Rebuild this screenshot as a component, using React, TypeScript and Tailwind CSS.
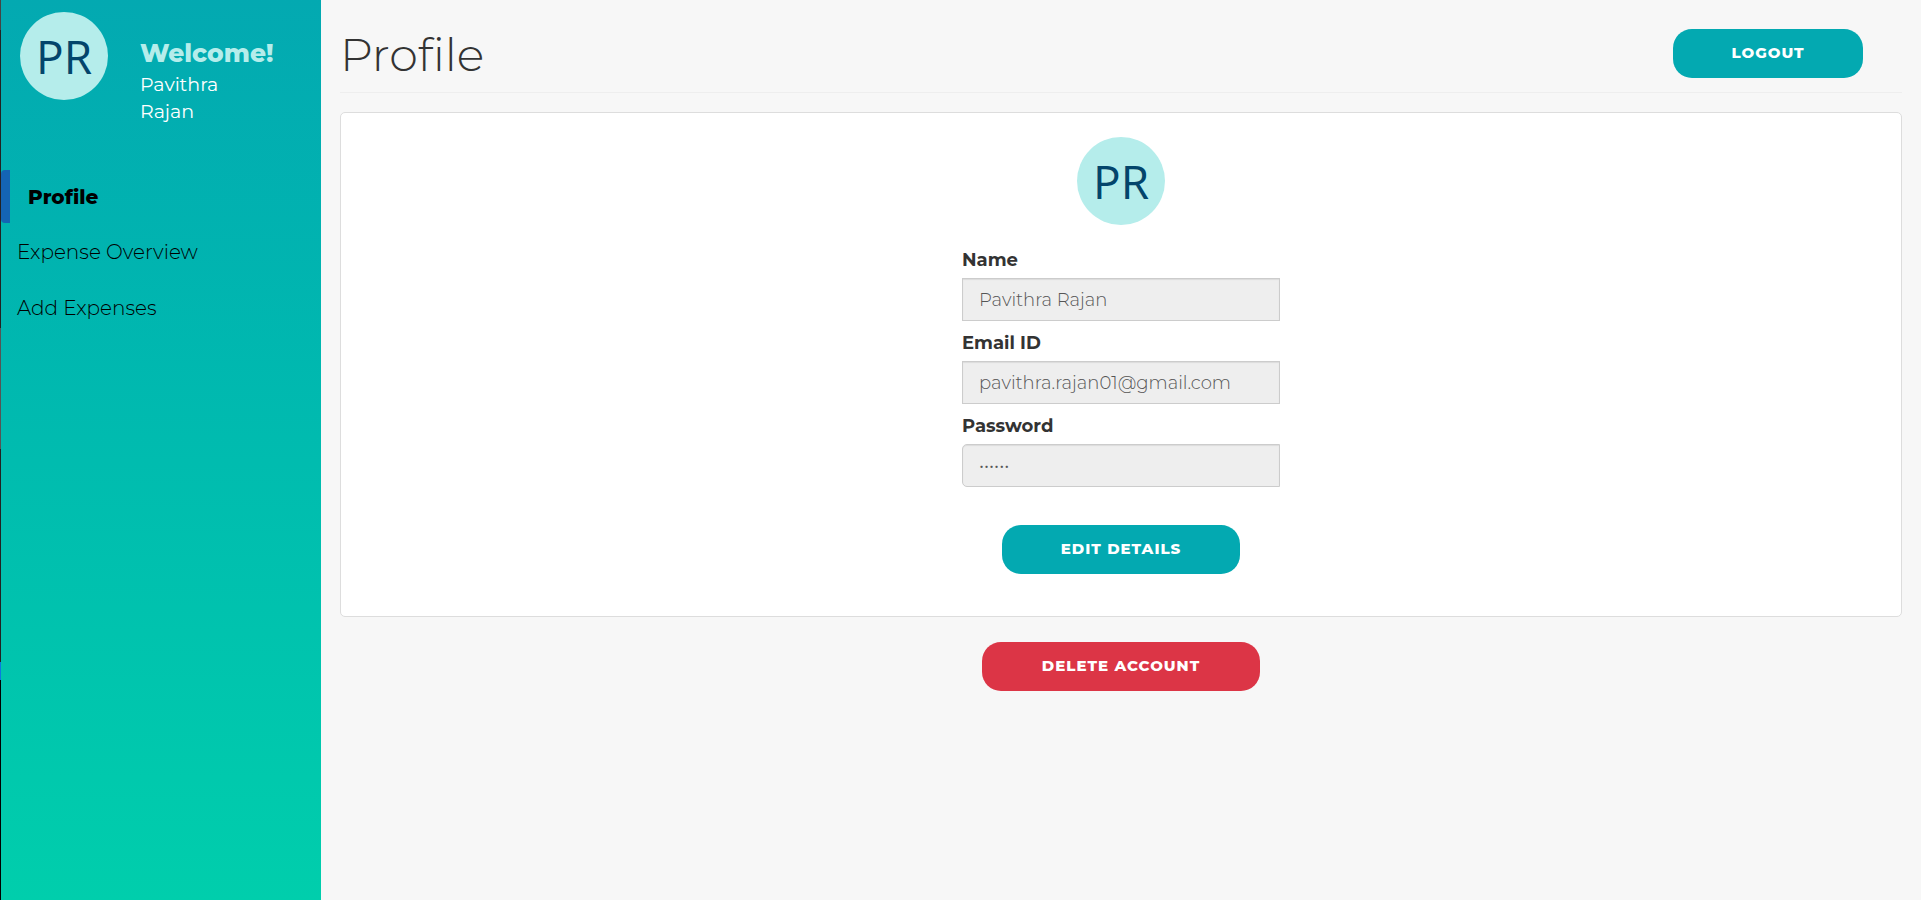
import React from "react";

const navItems = ["Expense Overview", "Add Expenses"];

const fields = [
  { id: "name", label: "Name", type: "text", value: "Pavithra Rajan", shape: "" },
  { id: "email", label: "Email ID", type: "email", value: "pavithra.rajan01@gmail.com", shape: "" },
  { id: "password", label: "Password", type: "password", value: "secret", shape: "rounded-l-[5px]" },
];

function Avatar() {
  return (
    <div className="flex size-[88px] shrink-0 items-center justify-center rounded-full bg-[#b5edeb] font-['Open_Sans',sans-serif] text-[46px] leading-none text-[#03456b]">
      PR
    </div>
  );
}

function PillButton({ children, className }: { children: React.ReactNode; className: string }) {
  return (
    <button
      type="button"
      className={`h-[49px] rounded-[19px] text-[15px] font-extrabold uppercase tracking-[1px] text-white ${className}`}
    >
      {children}
    </button>
  );
}

export default function App() {
  return (
    <div className="flex min-h-screen bg-[#f7f7f7] font-['Montserrat','Inter',sans-serif] text-[#333333]">
      <div className="flex w-px shrink-0 flex-col bg-black">
        <div className="h-[30px] bg-[#444444]" />
        <div className="h-[298px] bg-[#222222]" />
        <div className="h-[121px] bg-[#555555]" />
        <div className="h-[213px] bg-[#222222]" />
        <div className="h-[18px] bg-[#0a7be0]" />
      </div>

      <aside className="w-80 shrink-0 bg-linear-to-b from-[#03a9b1] to-[#00ceac]">
        <div className="flex gap-8 pt-3 pl-[19px]">
          <Avatar />
          <div className="pt-6 text-[19px] leading-[27px] text-white">
            <p className="text-[25px] leading-[35px] font-extrabold text-[#b5edeb]">Welcome!</p>
            <p>Pavithra</p>
            <p>Rajan</p>
          </div>
        </div>

        <nav className="mt-[45px] flex flex-col gap-px text-[20px] text-black">
          <a
            href="#profile"
            aria-current="page"
            className="flex h-[53px] items-center rounded-l-[4px] border-l-[9px] border-[#1464b4] pl-[18px] font-extrabold"
          >
            Profile
          </a>
          {navItems.map((item) => (
            <a key={item} href="#" className="flex h-[55px] items-center pl-4 font-light">
              {item}
            </a>
          ))}
        </nav>
      </aside>

      <main className="min-w-0 flex-1 px-[19px]">
        <header className="flex h-[93px] items-center justify-between border-b border-[#eeeeee] pt-4 pr-[39px]">
          <h1 className="text-[46px] font-light">Profile</h1>
          <PillButton className="mb-px w-[190px] bg-[#03a9b1]">Logout</PillButton>
        </header>

        <section className="mt-[19px] flex flex-col items-center rounded-[5px] border border-[#dddddd] bg-white pt-6 pb-[42px]">
          <Avatar />
          <form className="mt-[13px] flex w-[318px] flex-col items-center">
            {fields.map((field) => (
              <div key={field.id} className="w-full">
                <label htmlFor={field.id} className="flex h-10 items-center pt-1 text-lg font-bold">
                  {field.label}
                </label>
                <input
                  id={field.id}
                  type={field.type}
                  defaultValue={field.value}
                  readOnly
                  className={`block h-[43px] w-full border border-[#cccccc] bg-[#eeeeee] px-4 text-lg font-light text-[#555555] shadow-[inset_0_1px_1px_rgba(0,0,0,0.08)] outline-none ${field.shape}`}
                />
              </div>
            ))}
            <PillButton className="mt-[38px] w-[238px] bg-[#03a9b1]">Edit details</PillButton>
          </form>
        </section>

        <div className="flex justify-center py-[25px]">
          <PillButton className="w-[278px] bg-[#dc3546]">Delete account</PillButton>
        </div>
      </main>
    </div>
  );
}
